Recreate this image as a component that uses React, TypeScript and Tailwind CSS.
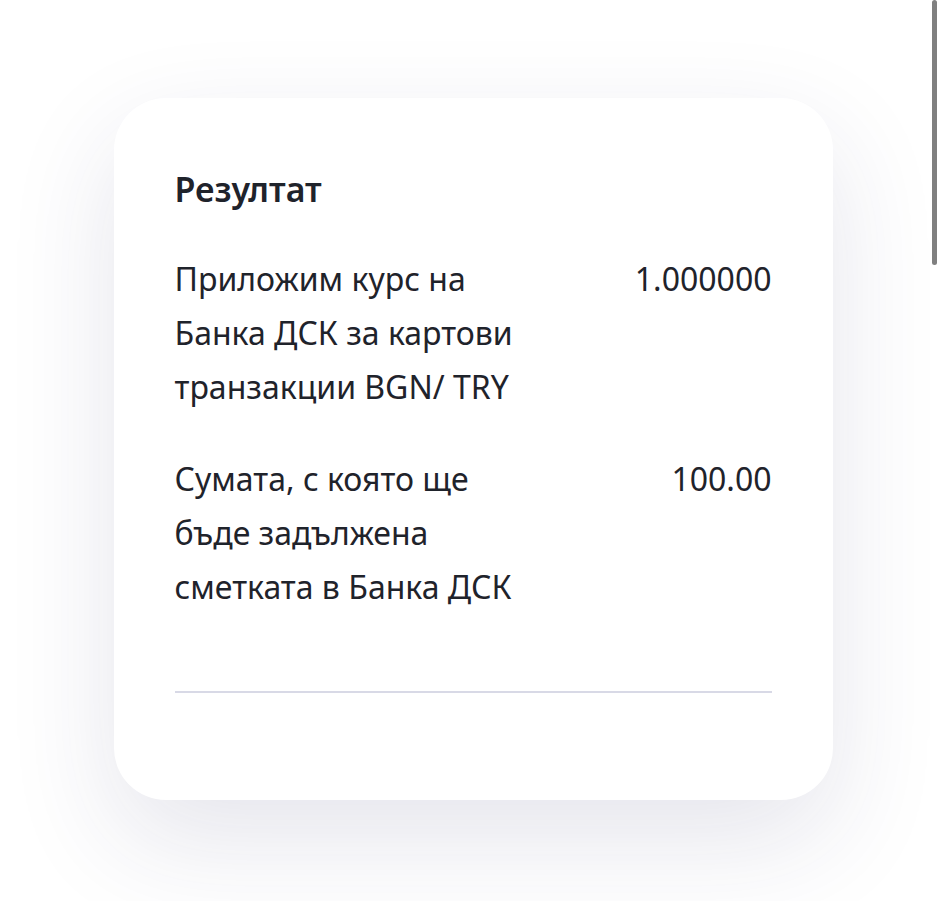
import React from 'react'

const rows = [
  { label: 'Приложим курс на Банка ДСК за картови транзакции BGN/ TRY', value: '1.000000' },
  { label: 'Сумата, с която ще бъде задължена сметката в Банка ДСК', value: '100.00' },
]

export default function App() {
  return (
    <main
      className="relative min-h-screen bg-white pt-[98px] text-[#1f232b]"
      style={{ fontFamily: '"Noto Sans", "Open Sans", sans-serif' }}
    >
      {/* Result card */}
      <section className="mx-auto h-[702px] w-[719px] rounded-[52px] bg-white px-[61px] pt-[71px] shadow-[0_40px_110px_rgba(40,45,100,0.12)]">
        <h2 className="text-[34px] font-semibold leading-[40px]">Резултат</h2>

        <div className="mt-[43px] flex flex-col gap-[38px]">
          {rows.map((row) => (
            <div key={row.value} className="flex items-start justify-between">
              <span className="w-[370px] text-[32px] leading-[54px]">{row.label}</span>
              <span className="text-[32px] leading-[54px]">{row.value}</span>
            </div>
          ))}
        </div>

        <div className="mt-[77px] h-[2px] bg-[#d8d9e6]" />
      </section>

      {/* overlay scrollbar */}
      <div className="absolute right-[9px] top-0 h-[265px] w-[5px] rounded-full bg-[#808080]" />
    </main>
  )
}
